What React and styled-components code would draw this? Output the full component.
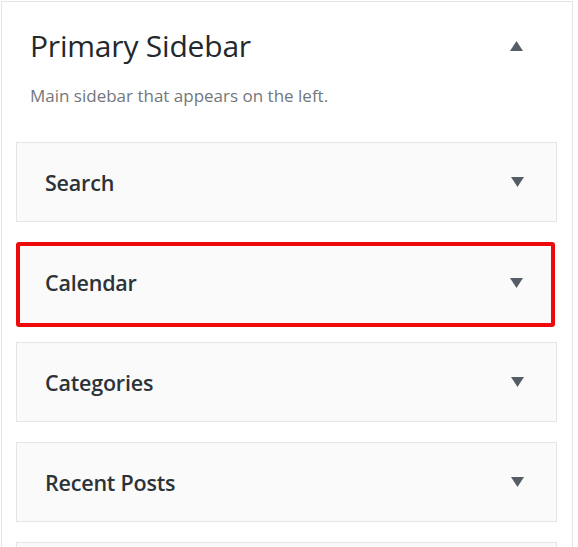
import React from 'react';
import styled, { createGlobalStyle } from 'styled-components';

const GlobalStyle = createGlobalStyle`
  html, body {
    margin: 0;
    padding: 0;
    background: #fff;
  }
  body {
    font-family: 'Open Sans', 'Noto Sans', sans-serif;
  }
`

const Page = styled.div`
  padding: 1px 5px 0 1px;
  height: 547px;
  box-sizing: border-box;
  overflow: hidden;
`

const Panel = styled.div`
  border: 1px solid #e5e5e5;
  border-bottom: none;
  background: #fff;
  padding: 0 15px 0 14px;
  height: 100%;
  box-sizing: border-box;
`

const Header = styled.div`
  display: flex;
  align-items: center;
  justify-content: space-between;
  padding: 24px 34px 0 14px;
`

const PanelTitle = styled.h3`
  margin: 0;
  font-size: 30px;
  font-weight: 400;
  color: #23282d;
  line-height: 40px;
  letter-spacing: -0.2px;
`

const Description = styled.p`
  margin: 17px 0 33px 14px;
  font-size: 17px;
  color: #72777c;
  line-height: 26px;
`

const WidgetList = styled.div`
  display: flex;
  flex-direction: column;
  gap: 20px;
`

const Widget = styled.div`
  display: flex;
  align-items: center;
  justify-content: space-between;
  height: ${p => p.$highlight ? '85px' : '80px'};
  flex-shrink: 0;
  box-sizing: border-box;
  margin-right: ${p => p.$highlight ? '2px' : '0'};
  margin-bottom: ${p => p.$highlight ? '-5px' : '0'};
  padding: 0 ${p => p.$highlight ? '28px' : '32px'} ${p => p.$highlight ? '4px' : '0'} ${p => p.$highlight ? '25px' : '28px'};
  background: #fafafa;
  border: ${p => p.$highlight ? '4px solid #ee0a0a' : '1px solid #e5e5e5'};
  border-radius: ${p => p.$highlight ? '3px' : '0'};
`

const WidgetTitle = styled.span`
  font-size: 21.5px;
  font-weight: 600;
  color: #2c3338;
  letter-spacing: -0.2px;
`

const Arrow = styled.svg`
  width: 13px;
  height: 10px;
  fill: #555d66;
  transform: ${p => p.$up ? 'rotate(180deg)' : 'none'};
`

function Caret({ up }) {
  return (
    <Arrow $up={up} viewBox="0 0 13 10">
      <path d="M0 0 L13 0 L6.5 10 Z" />
    </Arrow>
  )
}

const widgets = ['Search', 'Calendar', 'Categories', 'Recent Posts'];

function App() {
  return (
    <>
      <GlobalStyle />
      <Page>
        <Panel>
          <Header>
            <PanelTitle>Primary Sidebar</PanelTitle>
            <Caret up />
          </Header>
          <Description>Main sidebar that appears on the left.</Description>
          <WidgetList>
            {widgets.map(name =>
              <Widget key={name} $highlight={name == 'Calendar'}>
                <WidgetTitle>{name}</WidgetTitle>
                <Caret />
              </Widget>
            )}
            <Widget />
          </WidgetList>
        </Panel>
      </Page>
    </>
  )
}

export default App;
